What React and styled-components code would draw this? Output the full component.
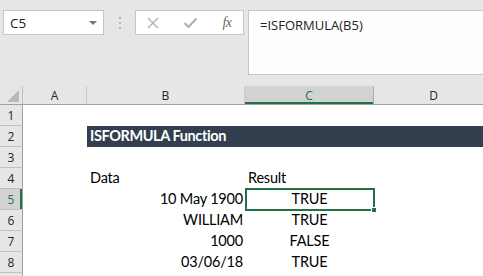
import React from "react";
import styled, { createGlobalStyle } from "styled-components";

const GREEN = "#217346";
const CELL_FONT = `Lato, "Liberation Sans", sans-serif`;
const UI_FONT = `"Open Sans", "Noto Sans", "Liberation Sans", sans-serif`;

const GlobalStyle = createGlobalStyle`
  html, body { margin: 0; padding: 0; background: #ffffff; overflow: hidden; }
  * { box-sizing: border-box; }
`;

const Window = styled.div`
  width: 483px;
  height: 276px;
  overflow: hidden;
  background: #ffffff;
  display: flex;
  flex-direction: column;
`;

const FormulaArea = styled.div`
  height: 86px;
  flex: none;
  background: #e6e6e6;
  display: flex;
  align-items: flex-start;
  padding: 10px 0 0 3px;
  & > * { flex: none; }
`;

const NameBox = styled.div`
  width: 101px;
  height: 25px;
  background: #ffffff;
  border: 1px solid #c6c6c6;
  display: flex;
  align-items: center;
  justify-content: space-between;
  padding: 0 6px 0 6px;
  font-family: ${UI_FONT};
  font-size: 13.5px;
  color: #222;
`;

const DropArrow = styled.span`
  width: 0;
  height: 0;
  border-left: 4px solid transparent;
  border-right: 4px solid transparent;
  border-top: 4px solid #777;
  margin-top: 1px;
`;

const Grip = styled.div`
  width: 31px;
  height: 25px;
  display: flex;
  flex-direction: column;
  align-items: center;
  justify-content: center;
  gap: 3px;
`;

const GripDot = styled.span`
  width: 2px;
  height: 2px;
  background: #b4b4b4;
`;

const ButtonBox = styled.div`
  width: 109px;
  height: 25px;
  background: #ffffff;
  border: 1px solid #c6c6c6;
  display: flex;
  align-items: center;
  gap: 15px;
  padding: 0 0 0 6px;
`;

const IconSlot = styled.span`
  width: 22px;
  display: flex;
  align-items: center;
  justify-content: center;
`;

const Fx = styled.span`
  font-family: "Liberation Serif", "DejaVu Serif", serif;
  font-style: italic;
  font-size: 14px;
  color: #6a6a6a;
  letter-spacing: -0.5px;
`;

const FormulaBar = styled.div`
  margin-left: 4px;
  width: 250px;
  height: 65px;
  background: #fdfdfd;
  border: 1px solid #c6c6c6;
  padding: 5px 0 0 11px;
  font-family: ${UI_FONT};
  font-size: 13px;
  color: #222;
`;

const Sheet = styled.div`
  display: flex;
  flex-direction: column;
`;

const HeaderRow = styled.div`
  display: flex;
  height: 19px;
  background: #e6e6e6;
  border-bottom: 1px solid #a0a0a0;
`;

const Corner = styled.div`
  width: 23px;
  flex: none;
  border-right: 1px solid #c0c0c0;
  display: flex;
  align-items: flex-end;
  justify-content: flex-end;
  padding: 0 3px 2px 0;
`;

const CornerTriangle = styled.span`
  width: 0;
  height: 0;
  border-left: 12px solid transparent;
  border-bottom: 12px solid #b8b8b8;
`;

const ColHeader = styled.div`
  width: ${(p) => p.$w}px;
  flex: none;
  display: flex;
  align-items: center;
  justify-content: center;
  font-family: ${UI_FONT};
  font-size: 12px;
  color: ${(p) => (p.$selected ? GREEN : "#262626")};
  background: ${(p) => (p.$selected ? "#d2d2d2" : "transparent")};
  border-right: 1px solid ${(p) => (p.$selected ? "#ababab" : "#c8c8c8")};
  box-shadow: ${(p) => (p.$selected ? `inset 0 -2px 0 ${GREEN}` : "none")};
  padding-top: 1px;
`;

const Row = styled.div`
  display: flex;
  height: 21px;
  flex: none;
`;

const RowHeader = styled.div`
  width: 23px;
  flex: none;
  display: flex;
  align-items: center;
  justify-content: center;
  background: ${(p) => (p.$selected ? "#d2d2d2" : "#e6e6e6")};
  border-right: 1px solid #a0a0a0;
  border-bottom: 1px solid #c0c0c0;
  box-shadow: ${(p) => (p.$selected ? `inset -2px 0 0 ${GREEN}` : "none")};
  font-family: ${UI_FONT};
  font-size: 12px;
  color: ${(p) => (p.$selected ? GREEN : "#262626")};
  padding-top: 1px;
`;

const Cell = styled.div`
  width: ${(p) => (p.$w ? `${p.$w}px` : "auto")};
  flex: ${(p) => (p.$w ? "none" : "1")};
  position: relative;
  display: flex;
  align-items: flex-end;
  justify-content: ${(p) =>
    p.$align === "right" ? "flex-end" : p.$align === "center" ? "center" : "flex-start"};
  padding: 0 ${(p) => (p.$align === "right" ? "2px" : "0")} 2px
    ${(p) => (p.$align === "left" ? "3px" : "0")};
  background: ${(p) => (p.$band ? "#333f4f" : "transparent")};
  color: ${(p) => (p.$band ? "#ffffff" : "#000000")};
  font-family: ${CELL_FONT};
  font-size: 14.5px;
  letter-spacing: ${(p) => (p.$band ? "-0.4px" : "-0.2px")};
  font-weight: ${(p) => (p.$band ? 700 : 400)};
  line-height: 18px;
  white-space: nowrap;
`;

const Selection = styled.span`
  position: absolute;
  top: -1px;
  left: 0;
  right: -1px;
  bottom: -1px;
  border: 2px solid ${GREEN};
  pointer-events: none;
`;

const FillHandle = styled.span`
  position: absolute;
  right: -4px;
  bottom: -4px;
  width: 6px;
  height: 6px;
  background: ${GREEN};
  border: 1px solid #ffffff;
`;

const COLS = [
  { key: "A", w: 64 },
  { key: "B", w: 158 },
  { key: "C", w: 129, selected: true },
  { key: "D", w: 120 },
];

const DATA = [
  { b: "10 May 1900", c: "TRUE", active: true },
  { b: "WILLIAM", c: "TRUE" },
  { b: "1000", c: "FALSE" },
  { b: "03/06/18", c: "TRUE" },
];

function CrossIcon() {
  return (
    <svg width="12" height="12" viewBox="0 0 12 12">
      <path d="M1 1 L11 11 M11 1 L1 11" stroke="#b0b0b0" strokeWidth="1.4" fill="none" />
    </svg>
  );
}

function CheckIcon() {
  return (
    <svg width="15" height="12" viewBox="0 0 15 12">
      <path d="M1.5 6 L5.5 10 L13.5 1.5" stroke="#b0b0b0" strokeWidth="2.2" fill="none" />
    </svg>
  );
}

export default function App() {
  return (
    <Window>
      <GlobalStyle />
      <FormulaArea>
        <NameBox>
          <span>C5</span>
          <DropArrow />
        </NameBox>
        <Grip>
          <GripDot />
          <GripDot />
          <GripDot />
        </Grip>
        <ButtonBox>
          <IconSlot>
            <CrossIcon />
          </IconSlot>
          <IconSlot>
            <CheckIcon />
          </IconSlot>
          <IconSlot>
            <Fx>fx</Fx>
          </IconSlot>
        </ButtonBox>
        <FormulaBar>=ISFORMULA(B5)</FormulaBar>
      </FormulaArea>
      <Sheet>
        <HeaderRow>
          <Corner>
            <CornerTriangle />
          </Corner>
          {COLS.map((c) => (
            <ColHeader key={c.key} $w={c.w} $selected={c.selected}>
              {c.key}
            </ColHeader>
          ))}
        </HeaderRow>
        <Row>
          <RowHeader>1</RowHeader>
        </Row>
        <Row>
          <RowHeader>2</RowHeader>
          <Cell $w={64} />
          <Cell $band $align="left">ISFORMULA Function</Cell>
        </Row>
        <Row>
          <RowHeader>3</RowHeader>
        </Row>
        <Row>
          <RowHeader>4</RowHeader>
          <Cell $w={64} />
          <Cell $w={158} $align="left">Data</Cell>
          <Cell $w={129} $align="left">
            Result
          </Cell>
        </Row>
        {DATA.map((d, i) => (
          <Row key={i}>
            <RowHeader $selected={d.active}>{i + 5}</RowHeader>
            <Cell $w={64} />
            <Cell $w={158} $align="right">
              {d.b}
            </Cell>
            <Cell $w={129} $align="center">
              {d.c}
              {d.active && (
                <Selection>
                  <FillHandle />
                </Selection>
              )}
            </Cell>
          </Row>
        ))}
        <Row>
          <RowHeader />
        </Row>
      </Sheet>
    </Window>
  );
}
